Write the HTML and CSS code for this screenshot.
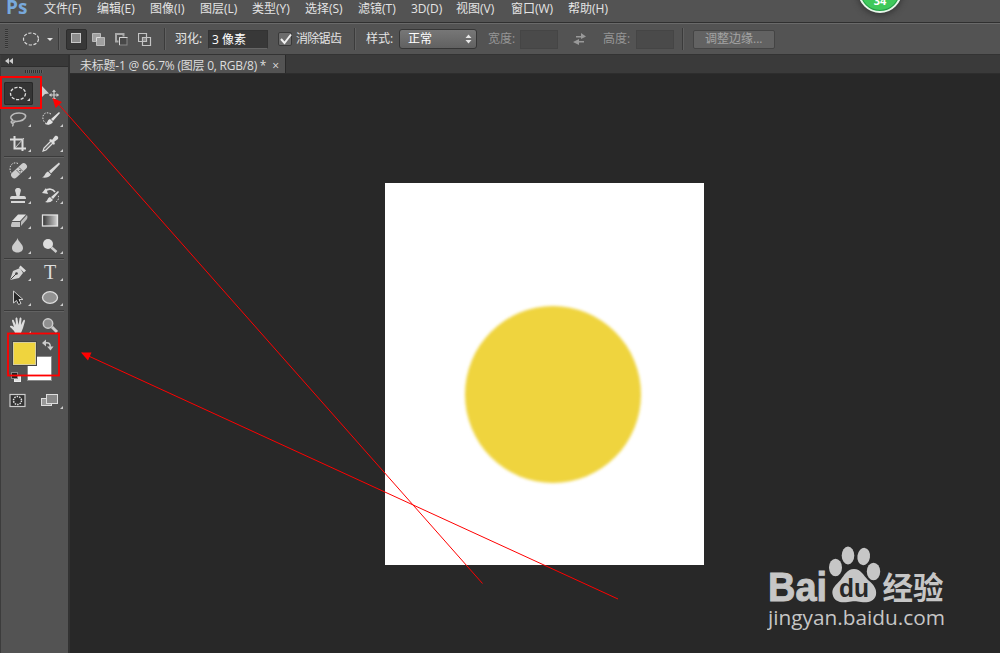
FILE: index.html
```
<!DOCTYPE html>
<html lang="zh-CN">
<head>
  <meta charset="UTF-8">
  <title>未标题-1</title>
  <link rel="stylesheet" href="styles.css">
</head>
<body>

  <!-- menu bar -->
  <div class="menubar">
    <span class="logo">Ps</span>
    <span>文件(F)</span>
    <span>编辑(E)</span>
    <span>图像(I)</span>
    <span>图层(L)</span>
    <span>类型(Y)</span>
    <span>选择(S)</span>
    <span>滤镜(T)</span>
    <span>3D(D)</span>
    <span>视图(V)</span>
    <span>窗口(W)</span>
    <span>帮助(H)</span>
  </div>
  <div class="badge">34</div>

  <!-- tool options -->
  <div class="options">
    <span class="grip"></span>
    <svg class="current" width="34" height="16">
      <ellipse cx="11" cy="8" rx="7.5" ry="6" fill="none" stroke="#d8d8d8" stroke-width="1.2" stroke-dasharray="3.2 1.6"/>
      <path d="M27 7h6l-3 3z" fill="#e0e0e0"/>
    </svg>
    <span class="sep"></span>
    <span class="mode active"><svg width="16" height="16"><rect x="2.5" y="1.5" width="9" height="9" fill="#8c8c8c" stroke="#c8c8c8"/></svg></span>
    <span class="mode"><svg width="16" height="16"><path d="M.5 .5h8v4h4v8h-8v-4h-4z" fill="#a0a0a0" stroke="#bbb"/><path d="M4.500 8.500v-4h4" fill="none" stroke="#ddd"/></svg></span>
    <span class="mode"><svg width="16" height="16"><path d="M3.500 8.500h-2.500v-7.500h7.500v2.500" fill="none" stroke="#aaa" stroke-width="2"/><rect x="4.500" y="4.500" width="7.500" height="7.500" fill="#484848" stroke="#888"/><path d="M4.500 12v-7.500h8" fill="none" stroke="#d4d4d4"/></svg></span>
    <span class="mode"><svg width="16" height="16"><path d="M.5 .5h8v8h-8zM4.500 4.500h8v8h-8z" fill="none" stroke="#c4c4c4" stroke-width="1.200"/><path d="M5 5h3v3h-3z" fill="#888"/></svg></span>
    <span class="sep"></span>
    <label>羽化:</label>
    <span class="field feather">3 像素</span>
    <span class="checkbox"><svg width="16" height="16"><path d="M3 7l3.500 4L13 2.500" fill="none" stroke="#f0f0f0" stroke-width="2"/></svg></span>
    <label class="antialias">消除锯齿</label>
    <span class="sep"></span>
    <label>样式:</label>
    <span class="select">正常<svg width="7" height="10"><path d="M.5 4L3.500 .5 6.500 4zM.5 6L3.500 9.500 6.500 6z" fill="#e6e6e6"/></svg></span>
    <label class="off">宽度:</label>
    <span class="field off"></span>
    <svg width="16" height="14"><path d="M4 4h5V1l5 3.500L9 7V5.500H4zM12 9H7V7L1 10l6 3v-2.500h5z" fill="#999"/></svg>
    <label class="off">高度:</label>
    <span class="field off"></span>
    <span class="sep"></span>
    <span class="button">调整边缘...</span>
  </div>

  <div class="workspace">
    <!-- toolbox -->
    <div class="toolbox">
      <div class="collapse"><svg width="9" height="6"><path d="M4 0v6L0 3zM8 0v6L4 3z" fill="#ccc"/></svg></div>
      <div class="handle"></div>

      <div class="tools">
        <span class="tool selected"><svg width="32" height="25"><ellipse cx="16" cy="12.500" rx="7.500" ry="6.200" fill="none" stroke="#e0e0e0" stroke-width="1.300" stroke-dasharray="3.200 1.500"/></svg></span>
        <span class="tool plain"><svg width="32" height="25"><path d="M8 5v11l3-3 4-.5z" fill="#ccc"/><path d="M20 9.500v9M15.500 14h9" stroke="#ccc" stroke-width="1.200"/><path d="M18 11l2-2.500 2 2.500zM18 17l2 2.500 2-2.500zM17.500 12L15 14l2.500 2zM22.500 12l2.500 2-2.500 2z" fill="#ccc"/></svg></span>
        <span class="tool"><svg width="32" height="25"><path d="M11 14c-5-2-1-7 6-7 5 0 8 2 6 5-2 3-8 4-11 3-2-1-4 1-2 2 2 0 3-1 3-2M10 17c2 1 1 3 0 3" fill="none" stroke="#bbb" stroke-width="1.500"/></svg></span>
        <span class="tool"><svg width="32" height="25"><path d="M17 8c-5-3-9 0-8 5 1 4 4 6 7 5" fill="none" stroke="#ddd" stroke-dasharray="1.500 1.300"/><path d="M25 6L17 13l2 2 7-8zM16 13l3 3c-2 3-5 3-8 2 3-1 2-4 5-5z" fill="#e2e2e2"/></svg></span>
        <span class="tool"><svg width="32" height="25"><path d="M12.500 5v12.500H24M8 8.500h12.500V20" fill="none" stroke="#ddd" stroke-width="2"/><path d="M13 17L22 7" stroke="#ccc"/></svg></span>
        <span class="tool"><svg width="32" height="25"><path d="M17 10l-7 7-1 3 3-1 7-7" fill="#666" stroke="#ddd" stroke-width="1.200"/><path d="M15 9l2-1 1 1 3-4c2-1 4 1 3 3l-4 3 1 1-1 2z" fill="#ddd"/></svg></span>
      </div>
      <div class="rule"></div>
      <div class="tools">
        <span class="tool"><svg width="32" height="25"><path d="M16 5.500c-4-2-8 1-8 5 0 3 1 5 3 6" fill="none" stroke="#ddd" stroke-dasharray="1.500 1.300"/><rect x="7.500" y="9.500" width="19" height="6.500" rx="3" fill="#ccc" transform="rotate(-43 17 12.700)"/><path d="M14.500 12l4 4M17 9.500l4 4" stroke="#666"/><path d="M17 12.500h2M18 14h1" stroke="#666"/></svg></span>
        <span class="tool"><svg width="32" height="25"><path d="M25 4.500L15 13l2 2.500L26 6zM14 13.500l3 3c-2 3-5 3.500-9 3 3-1 3-5 6-6z" fill="#d8d8d8"/></svg></span>
        <span class="tool"><svg width="32" height="25"><path d="M14.500 13l-1-4c-1-2 0-4 2.500-4s3.500 2 2.500 4l-1 4H22q2 0 2 3H8q0-3 2-3zM9 18h14v2H9z" fill="#d8d8d8"/></svg></span>
        <span class="tool"><svg width="32" height="25"><path d="M24 8l-7 6 2 2 6-7zM16 14l3 3c-2 2.500-6 3-8 2 3-1 2-4 5-5z" fill="#ddd"/><path d="M11 8c4-3 8-2 10 1" fill="none" stroke="#ddd" stroke-width="1.700"/><path d="M8 10l4-5 2 6z" fill="#ddd"/><path d="M22 19c3-2 3-5 2-7" fill="none" stroke="#ccc" stroke-dasharray="1.500 1.300"/></svg></span>
        <span class="tool"><svg width="32" height="25"><path d="M16 6.500h8L18 13h-8z" fill="#e0e0e0"/><path d="M10 14h8v5h-8q-1.500 0-1-2z" fill="#c4c4c4"/><path d="M19 13.500L25 7q1 2 0 4l-6 7z" fill="#bbb"/></svg></span>
        <span class="tool"><svg width="32" height="25"><defs><linearGradient id="grad"><stop offset="0" stop-color="#333"/><stop offset="1" stop-color="#d4d4d4"/></linearGradient></defs><rect x="8.500" y="7" width="15" height="11" fill="url(#grad)" stroke="#e2e2e2" stroke-width="1.300"/></svg></span>
        <span class="tool"><svg width="32" height="25"><path d="M15.500 5c1 4 5.500 6 5.500 10 0 6-11 6-11 0 0-4 4.500-6 5.500-10z" fill="#ccc"/></svg></span>
        <span class="tool"><svg width="32" height="25"><circle cx="14" cy="11" r="5" fill="#ddd"/><path d="M17.500 14.500l5 4.500" stroke="#ccc" stroke-width="2.500"/></svg></span>
      </div>
      <div class="rule"></div>
      <div class="tools">
        <span class="tool"><svg width="32" height="25"><path d="M8 20l3-9 7-3 3 5-4 5z" fill="#d4d4d4"/><path d="M8.500 19.500l6-6" stroke="#444"/><circle cx="14.500" cy="13.500" r="1.300" fill="#444"/><path d="M18.500 5.500l5.500 5-2 2-5-5z" fill="#ddd"/></svg></span>
        <span class="tool letter">T</span>
        <span class="tool"><svg width="32" height="25"><path d="M11.500 6v12l3-2.500 2 4 2.500-1-2-4h4z" fill="#292929" stroke="#ccc"/></svg></span>
        <span class="tool"><svg width="32" height="25"><ellipse cx="16" cy="12.500" rx="7.500" ry="5.800" fill="#929292" stroke="#ddd" stroke-width="1.300"/></svg></span>
      </div>
      <div class="rule last"></div>
      <div class="tools">
        <span class="tool"><svg width="32" height="25"><path d="M13 20c-1-3-3-4-5-6 0-2 2-1 4 0l-2-6c0-2 2-1 2 0l2 4-.5-6c0-2 2-2 2 0l1 6 1-6c0-2 2-2 2 0l-.5 6 2-4c1-2 2-1 2 0l-2 7-2 5z" fill="#ddd"/></svg></span>
        <span class="tool plain"><svg width="32" height="25"><circle cx="14" cy="10.500" r="4.700" fill="#909090" stroke="#ccc" stroke-width="1.500"/><path d="M18 14l5 5" stroke="#ccc" stroke-width="3"/></svg></span>
      </div>

      <div class="colors">
        <svg width="66" height="51">
          <rect x="26.500" y="19.500" width="24" height="24" fill="#fff" stroke="#8a8a8a"/>
          <rect x="11.500" y="4.500" width="24" height="24" fill="#efd43e" stroke="#444"/>
          <rect x="12.500" y="5.500" width="22" height="22" fill="none" stroke="#d8cf9c"/>
          <path d="M44 6c4-1 6 1 5 5" fill="none" stroke="#ccc" stroke-width="1.500"/>
          <path d="M41 6l4-3.500v7zM46 9.500h6.500l-3 4z" fill="#ccc"/>
          <rect x="13.500" y="38.500" width="6" height="6" fill="#ddd" stroke="#eee"/>
          <rect x="10.500" y="35.500" width="6" height="6" fill="#222" stroke="#888"/>
        </svg>
      </div>
      <div class="tools">
        <span class="tool plain"><svg width="32" height="25"><rect x="8" y="6.500" width="15" height="12" fill="#333" stroke="#ccc" stroke-width="1.200"/><circle cx="15.500" cy="12.500" r="4" fill="none" stroke="#e4e4e4" stroke-width="1.500" stroke-dasharray="1.500 1"/></svg></span>
        <span class="tool"><svg width="32" height="25"><rect x="7.500" y="10.500" width="10" height="7" fill="#999" stroke="#ddd"/><rect x="12.500" y="6.500" width="11" height="9" fill="#888" stroke="#ddd"/></svg></span>
      </div>
    </div>

    <!-- document -->
    <div class="document">
      <div class="tabs"><span class="tab">未标题-1 @ 66.7% (图层 0, RGB/8) * <i>×</i></span></div>
      <div class="canvas">
        <div class="paper"><div class="yolk"></div></div>
      </div>
    </div>
  </div>

  <!-- red annotations -->
  <svg class="marks" width="1000" height="653">
    <g fill="none" stroke="#f00">
      <rect x="1" y="77" width="40" height="31" stroke-width="2"/>
      <rect x="8" y="333.500" width="51" height="42" stroke-width="1.800"/>
      <path d="M54 99L482.500 583.500M82 353L618 599"/>
    </g>
    <path d="M52.500 98l9.500 4-6.500 6zM81 352.500l10.500 0-3.500 8z" fill="#f00"/>
  </svg>

  <svg class="watermark" width="190" height="100">
    <g fill="#c6c6c6">
      <text class="bai" x="1" y="61" textLength="59" lengthAdjust="spacingAndGlyphs">Bai</text>
      <ellipse cx="68.500" cy="27.500" rx="6.500" ry="8.700"/>
      <ellipse cx="81" cy="15.500" rx="6.300" ry="9"/>
      <ellipse cx="96.700" cy="16.500" rx="6.300" ry="8.700" transform="rotate(8 96.700 16.500)"/>
      <ellipse cx="106.500" cy="31.500" rx="6.700" ry="8.700"/>
      <path d="M87 29c7 0 9 6 14 11 6 5 9 9 8 15-2 7-9 8-15 7-5-1-8-1-13 0-7 1-14 0-15.500-8-1-6 3.500-9 8-14 4-5 6.500-11 13.500-11z"/>
      <text class="jing" x="115.500" y="58.500" textLength="61" lengthAdjust="spacingAndGlyphs">经验</text>
      <text class="site" x="1" y="85" textLength="177" lengthAdjust="spacingAndGlyphs">jingyan.baidu.com</text>
    </g>
    <text class="du" x="72" y="56.500" textLength="30" lengthAdjust="spacingAndGlyphs">du</text>
  </svg>

</body>
</html>
```
FILE: styles.css
```
* {
  box-sizing: border-box;
}
body {
  margin: 0;
  width: 1000px;
  height: 653px;
  overflow: hidden;
  position: relative;
  display: flex;
  flex-direction: column;
  background: #282828;
  color: #e4e4e4;
  font: 12px/16px "Open Sans", "Noto Sans CJK SC", sans-serif;
  white-space: nowrap;
}
svg {
  display: block;
}

/* menu bar */
.menubar {
  height: 23px;
  flex: none;
  display: grid;
  grid-template-columns: 38px 53px 53px 50px 52px 53px 53px 53px 45px 55px 57px 50px;
  padding-left: 6px;
  background: #535353;
  border-bottom: 1px solid #303030;
}
.menubar span {
  line-height: 17px;
}
.menubar .logo {
  color: #78a9dc;
  font-size: 19px;
  font-weight: bold;
  line-height: 14px;
}
.badge {
  position: absolute;
  left: 858px;
  top: -31px;
  width: 44px;
  height: 44px;
  border: 2px solid #e6f5e8;
  border-radius: 50%;
  background: #3fc95b;
  box-shadow: inset 0 0 0 1px #249b48, 0 2px 6px #333;
  color: #fff;
  font-size: 11px;
  font-weight: bold;
  line-height: 60px;
  text-align: center;
}

/* options bar */
.options {
  height: 32px;
  flex: none;
  display: grid;
  grid-template-columns: 15px 38px 8px 26px 23px 23px 26px 11px 33px 70px 18px 58px 12px 33px 89px 32px 52px 31px 33px 46px 11px 82px;
  align-items: center;
  padding-left: 5px;
  background: #535353;
  border-top: 1px solid #6a6a6a;
  border-bottom: 1px solid #333;
}
.grip {
  width: 3px;
  height: 20px;
  background: repeating-linear-gradient(#353535 0 1px, #5c5c5c 1px 2px);
}
.sep {
  width: 2px;
  height: 22px;
  background: #3b3b3b;
  border-right: 1px solid #606060;
}
.mode {
  height: 13px;
}
.mode.active {
  width: 21px;
  height: 21px;
  padding: 2px;
  background: #383838;
  border: 1px solid #2d2d2d;
  border-radius: 2px;
}
.field {
  width: 60px;
  height: 19px;
  padding-left: 3px;
  background: #383838;
  border: 1px solid #333;
  border-bottom-color: #666;
  color: #fff;
  line-height: 17px;
}
.field.off {
  width: 38px;
  background: #4a4a4a;
  border-color: #454545;
}
label.off {
  color: #969696;
}
.antialias {
  letter-spacing: -.7px;
}
.checkbox {
  width: 14px;
  height: 14px;
  background: #6c6c6c;
  border: 1px solid #393939;
  border-radius: 2px;
}
.checkbox svg {
  margin: -1px;
}
.select {
  width: 78px;
  height: 20px;
  display: flex;
  justify-content: space-between;
  align-items: center;
  padding: 0 4px 0 8px;
  background: linear-gradient(#777, #616161);
  border: 1px solid #363636;
  border-radius: 3px;
  color: #fff;
}
.button {
  height: 19px;
  padding-left: 11px;
  background: #626262;
  border: 1px solid #444;
  border-radius: 2px;
  color: #a4a4a4;
  line-height: 16px;
}

.workspace {
  flex: 1;
  display: flex;
}

/* toolbox */
.toolbox {
  width: 70px;
  flex: none;
  background: #535353;
  border-left: 1px solid #3c3c3c;
  border-right: 2px solid #323232;
  display: flex;
  flex-direction: column;
}
.collapse {
  height: 12px;
  padding: 3px 0 0 4px;
  background: #393939;
  border-bottom: 1px solid #2e2e2e;
}
.handle {
  width: 18px;
  height: 3px;
  margin: 3px 0 8px 24px;
  background: repeating-linear-gradient(90deg, #303030 0 1px, #606060 1px 2px);
}
.tools {
  display: grid;
  grid-template-columns: 32px 32px;
  grid-auto-rows: 25px;
  padding-left: 1px;
}
.tool {
  position: relative;
}
/* small corner triangle: more tools in the group */
.tool::after {
  content: "";
  position: absolute;
  right: 3px;
  bottom: 4px;
  border-left: 3px solid transparent;
  border-bottom: 3px solid #ccc;
}
.tool.plain::after {
  display: none;
}
.tool.selected {
  background: #353535;
  box-shadow: inset 0 0 0 1px #282828;
  border-radius: 2px;
  margin: 1px 1px 1px 2px;
}
.tool.selected svg {
  margin: -1px 0 0 -2px;
}
.letter {
  color: #ddd;
  font: 20px/25px "Liberation Serif", serif;
  text-align: center;
}
.rule {
  height: 2px;
  margin: 0 4px 0 3px;
  background: #3b3b3b;
  border-bottom: 1px solid #626262;
}
.rule.last {
  margin-bottom: 1px;
}
.colors {
  height: 51px;
  margin-top: -1px;
}

/* document window */
.document {
  flex: 1;
  display: flex;
  flex-direction: column;
}
.tabs {
  height: 19px;
  background: #3a3a3a;
  border-bottom: 1px solid #2d2d2d;
}
.tab {
  display: block;
  width: 216px;
  height: 18px;
  padding-left: 10px;
  background: #535353;
  border-right: 1px solid #292929;
  line-height: 21px;
  color: #ddd;
  letter-spacing: -.22px;
}
.tab i {
  margin-left: 3px;
  font-style: normal;
}
.canvas {
  flex: 1;
  padding: 109px 0 0 315px;
}
.paper {
  width: 319px;
  height: 382px;
  padding: 123px 0 0 80px;
  background: #fff;
}
.yolk {
  width: 176px;
  height: 177px;
  border-radius: 50%;
  background: #efd43e;
  filter: blur(1.5px);
}

.marks {
  position: absolute;
  left: 0;
  top: 0;
}
.watermark {
  position: absolute;
  left: 767px;
  top: 540px;
}
.bai {
  font: bold 41px "Liberation Sans", sans-serif;
  stroke: #c6c6c6;
  stroke-width: 1px;
}
.du {
  font: bold 26px "Liberation Sans", sans-serif;
  fill: #282828;
}
.jing {
  font: bold 31px "Noto Sans CJK SC", sans-serif;
}
.site {
  font: 500 20px "Open Sans", sans-serif;
}
```
